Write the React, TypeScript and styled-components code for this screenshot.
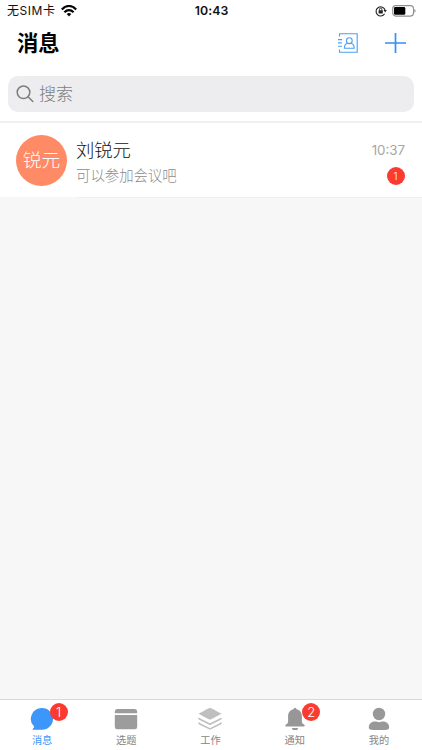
import React from 'react';
import styled, { createGlobalStyle } from 'styled-components';

const GlobalStyle = createGlobalStyle`
  * { box-sizing: border-box; }
  html, body, #root { height: 100%; }
  body {
    margin: 0;
    background: #f7f7f7;
    font-family: Inter, "Noto Sans CJK SC", sans-serif;
    overflow: hidden;
  }
  svg { display: block; flex: none; }
`;

const Screen = styled.div`
  width: 422px;
  height: 750px;
  display: flex;
  flex-direction: column;
  background: #f7f7f7;
`;

const StatusBar = styled.div`
  height: 21px;
  flex: none;
  display: grid;
  grid-template-columns: 1fr auto 1fr;
  align-items: center;
  padding: 0 6px 0 7px;
  background: #fff;
  color: #111;
`;

const Carrier = styled.div`
  display: flex;
  align-items: center;
  gap: 5px;
  font-size: 12px;
  line-height: 20px;
  white-space: pre;
  letter-spacing: 0.55px;
`;

const Clock = styled.div`
  font-size: 12.3px;
  font-weight: 600;
  line-height: 20px;
  letter-spacing: 0.1px;
`;

const Indicators = styled.div`
  display: flex;
  justify-content: flex-end;
  align-items: center;
  gap: 5px;
`;

const Header = styled.header`
  height: 44px;
  flex: none;
  display: flex;
  align-items: center;
  justify-content: space-between;
  padding: 0 16px 0 17px;
  background: #fff;
`;

const Title = styled.h1`
  margin: 0;
  font-size: 21.3px;
  line-height: 44px;
  font-weight: 700;
  color: #000;
`;

const Actions = styled.div`
  display: flex;
  align-items: center;
  gap: 27px;
`;

const SearchArea = styled.div`
  height: 58px;
  flex: none;
  padding: 11px 8px 0;
  background: #fff;
  border-bottom: 2px solid #f0f0f1;
`;

const SearchBox = styled.div`
  height: 36px;
  display: flex;
  align-items: center;
  gap: 5px;
  padding-left: 8px;
  border-radius: 10px;
  background: #ededef;
  color: #7d7d81;
  font-size: 17px;
  font-weight: 300;
  line-height: 38px;
`;

const Conversation = styled.div`
  height: 74px;
  flex: none;
  display: flex;
  padding: 0 0 0 16px;
  gap: 9px;
  background: #fff;
`;

const Avatar = styled.div`
  width: 51px;
  height: 51px;
  margin-top: 12px;
  border-radius: 50%;
  background: #ff8a66;
  color: #fff;
  font-size: 18.7px;
  font-weight: 300;
  line-height: 52px;
  text-align: center;
  white-space: nowrap;
`;

const Details = styled.div`
  flex: 1;
  height: 75px;
  display: flex;
  justify-content: space-between;
  padding: 12px 17px 0 0;
  border-bottom: 1px solid #f0f0f0;
`;

const Name = styled.div`
  font-size: 18.3px;
  font-weight: 300;
  line-height: 30px;
  color: #111;
`;

const Preview = styled.div`
  font-size: 14.4px;
  font-weight: 300;
  line-height: 22px;
  color: #8c8c8c;
`;

const Meta = styled.div`
  display: flex;
  flex-direction: column;
  align-items: flex-end;
`;

const Time = styled.div`
  font-size: 13.3px;
  line-height: 30px;
  color: #a6a6a6;
`;

const Badge = styled.span<{ $size: number }>`
  display: block;
  width: 18px;
  height: 18px;
  border-radius: 50%;
  background: #fb3b30;
  color: #fff;
  font-size: ${(p) => p.$size}px;
  font-weight: 300;
  line-height: 18px;
  text-align: center;
`;

const UnreadBadge = styled(Badge)`
  margin: 1.5px 0.5px 0 0;
`;

const TabBar = styled.nav`
  height: 51px;
  flex: none;
  margin-top: auto;
  display: grid;
  grid-template-columns: repeat(5, 1fr);
  padding-right: 1px;
  background: #fff;
  border-top: 1px solid #d9d9da;
`;

const Tab = styled.div<{ $active?: boolean }>`
  display: flex;
  flex-direction: column;
  align-items: center;
  padding-top: 6px;
  color: ${(p) => (p.$active ? '#3d96fa' : '#858585')};
  font-size: 10.2px;
  line-height: 15px;
`;

const TabIcon = styled.div`
  position: relative;
  height: 27px;
`;

const TabBadge = styled(Badge)`
  position: absolute;
  top: -3px;
  left: 19.5px;
`;

const Wifi = () => (
  <svg width="16" height="12" viewBox="0 0 16 12" fill="none" stroke="#050505" strokeWidth="2.2">
    <path d="M.8 4.4C5-0.2 11-0.2 15.200 4.400" />
    <path d="M3.4 7.200C6.200 4.500 9.800 4.500 12.600 7.200" />
    <path d="M8 11.4 5.7 9Q8 7 10.3 9Z" fill="#050505" stroke="none" />
  </svg>
);

const RotationLock = () => (
  <svg width="12" height="12" viewBox="0 0 12 12" fill="none" stroke="#222" strokeWidth="1.1">
    <path d="M9.600 8.800A4.600 4.600 0 1 1 10.100 5.200" />
    <path d="M8.500 5.100h3.300L10.200 7.400Z" fill="#222" stroke="none" />
    <rect x="3.600" y="5.300" width="4.200" height="3.300" rx="0.500" fill="#222" stroke="none" />
    <path d="M4.500 5.500V4.300a1.200 1.200 0 0 1 2.400 0v1.200" strokeWidth="0.900" />
  </svg>
);

const Battery = () => (
  <svg width="24" height="12" viewBox="0 0 24 12">
    <rect x="0.7" y="0.6" width="20.800" height="10.500" rx="3" fill="none" stroke="#8f8f8f" strokeWidth="1.100" />
    <rect x="2" y="2" width="11.300" height="7.700" rx="1.300" fill="#000" />
    <path d="M22.400 4.100q1.200.6 1.200 1.800t-1.200 1.800Z" fill="#8f8f8f" />
  </svg>
);

const Contacts = () => (
  <svg width="20" height="20" viewBox="0 0 20 20" fill="none" stroke="#4b9ef5" strokeWidth="1.1">
    <path d="M1.500 3.500V.8h17.700v18.400H1.500V16.500" />
    <path d="M0 6.600h4.200M0 9.900h3.800M0 13.200h4.200" />
    <circle cx="11.300" cy="7.700" r="2.900" />
    <path d="M9.600 10.200C7.300 10.700 6.400 12.500 6.400 15.300H16.200C16.200 12.500 15.300 10.700 13 10.200" />
  </svg>
);

const Plus = () => (
  <svg width="21" height="20" viewBox="0 0 21 20" stroke="#3390f8" strokeWidth="1.7">
    <path d="M0 10h21M10.500 0v20" />
  </svg>
);

const SearchIcon = () => (
  <svg width="18" height="18" viewBox="0 0 18 18" fill="none" stroke="#7d7d81" strokeWidth="1.5">
    <circle cx="7.500" cy="7.300" r="6.300" />
    <path d="m12 11.800 4.800 4.700" strokeLinecap="round" />
  </svg>
);

const ChatIcon = () => (
  <svg width="24" height="24" viewBox="0 0 24 24" fill="#3d96fa">
    <path d="M12 2A11 10.900 0 1 1 12 23.800H3.200c-.8 0-.9-.7-.3-1.100.8-.6 1.200-1.300 1.200-2.100A11 10.900 0 0 1 12 2Z" />
  </svg>
);

const CardIcon = () => (
  <svg width="24" height="24" viewBox="0 0 24 24" fill="#9c9c9c">
    <path d="M.8 7.200V5.500Q.8 3 3.200 3h17.600q2.400 0 2.400 2.500v1.700ZM.8 9.100h22.400v11.700q0 2.500-2.400 2.500H3.200Q.8 23.300.8 20.800Z" />
  </svg>
);

const LayersIcon = () => (
  <svg width="24" height="24" viewBox="0 0 24 24">
    <path d="M12 1.700Q12.700 1.700 23.500 7.800 12.700 13.700 12 13.700T.5 7.800Q11.300 1.700 12 1.700Z" fill="#bfbfbf" />
    <path d="M1 11.800Q.9 12.700 2 13.200L12 18.200 22 13.200Q23.100 12.700 23 11.800M1 16.500Q.9 17.400 2 17.900L12 22.900 22 17.900Q23.100 17.400 23 16.500" fill="none" stroke="#c0c0c0" strokeWidth="1.700" />
  </svg>
);

const BellIcon = () => (
  <svg width="24" height="24" viewBox="0 0 24 24" fill="#979797">
    <path d="M10.500 3.300Q10.700 1.700 12 1.700t1.500 1.600C17 4 18.900 6.800 18.900 10.300v5.200c0 1.500.6 2.100 2 3 1.500 1 1 2-.6 2H3.700c-1.600 0-2.100-1-.6-2 1.400-.9 2-1.500 2-3v-5.200c0-3.500 1.900-6.300 5.400-7ZM8.900 22h6.200q-.7 2.700-3.100 2.700T8.900 22Z" />
  </svg>
);

const PersonIcon = () => (
  <svg width="24" height="24" viewBox="0 0 24 24" fill="#989898">
    <circle cx="12" cy="8" r="6.200" />
    <path d="M1.800 21.500c0-3.900 3.200-5.900 6.500-5.900 1.400 0 2.100.6 3.700.6s2.300-.6 3.700-.6c3.300 0 6.500 2 6.500 5.900 0 2-2 2.700-10.200 2.700s-10.200-.7-10.200-2.700Z" />
  </svg>
);

const tabs = [
  { label: '消息', icon: <ChatIcon />, badge: 1, active: true },
  { label: '选题', icon: <CardIcon /> },
  { label: '工作', icon: <LayersIcon /> },
  { label: '通知', icon: <BellIcon />, badge: 2 },
  { label: '我的', icon: <PersonIcon /> },
];

export default function App() {
  return (
    <Screen>
      <GlobalStyle />
      <StatusBar>
        <Carrier>无SIM卡<Wifi /></Carrier>
        <Clock>10:43</Clock>
        <Indicators><RotationLock /><Battery /></Indicators>
      </StatusBar>
      <Header>
        <Title>消息</Title>
        <Actions><Contacts /><Plus /></Actions>
      </Header>
      <SearchArea>
        <SearchBox><SearchIcon />搜索</SearchBox>
      </SearchArea>
      <Conversation>
        <Avatar>锐元</Avatar>
        <Details>
          <div>
            <Name>刘锐元</Name>
            <Preview>可以参加会议吧</Preview>
          </div>
          <Meta>
            <Time>10:37</Time>
            <UnreadBadge $size={10}>1</UnreadBadge>
          </Meta>
        </Details>
      </Conversation>
      <TabBar>
        {tabs.map((tab) => (
          <Tab key={tab.label} $active={tab.active}>
            <TabIcon>
              {tab.icon}
              {tab.badge && <TabBadge $size={13}>{tab.badge}</TabBadge>}
            </TabIcon>
            {tab.label}
          </Tab>
        ))}
      </TabBar>
    </Screen>
  );
}
